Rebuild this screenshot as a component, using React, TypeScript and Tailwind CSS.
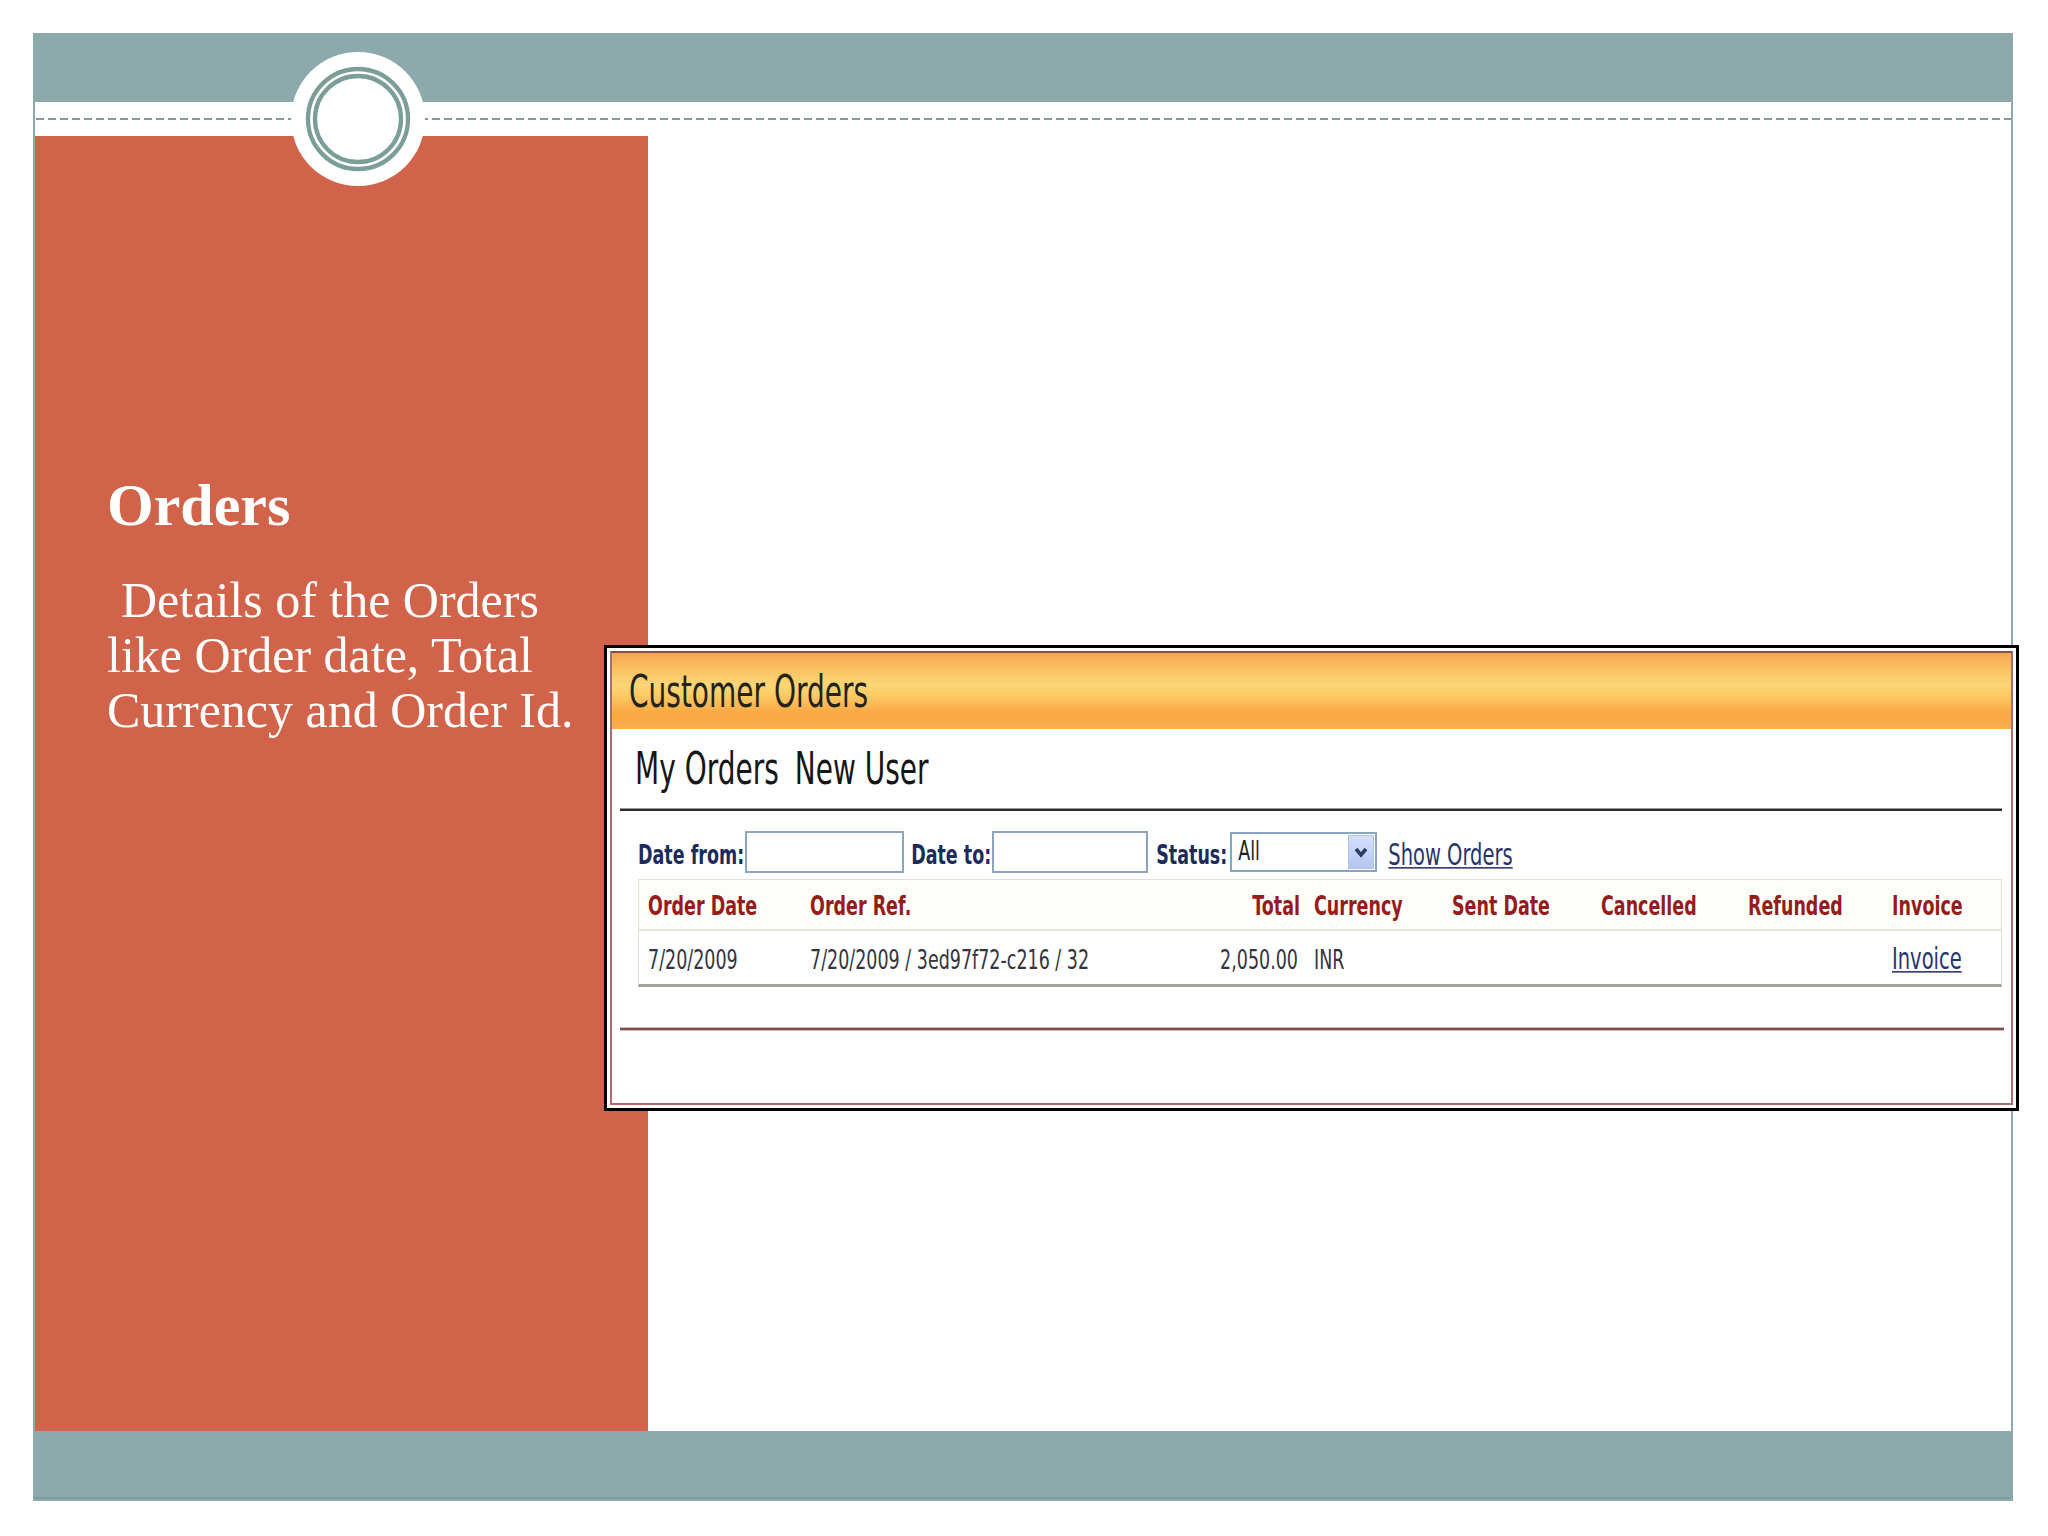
import type { ReactNode } from "react";

// the embedded screenshot is stretched vertically, so its text is too
function S({ children, className = "" }: { children: ReactNode; className?: string }) {
  return <span className={"inline-block scale-y-[1.56] leading-none " + className}>{children}</span>;
}

function Ring() {
  return (
    <div className="absolute left-[291px] top-[52px] h-[134px] w-[134px] rounded-full bg-white">
      <svg width="134" height="134" viewBox="0 0 134 134">
        <circle cx="67" cy="67" r="50" fill="none" stroke="#7b9e99" strokeWidth="4.3" />
        <circle cx="67" cy="67" r="43" fill="none" stroke="#7b9e99" strokeWidth="4.3" />
      </svg>
    </div>
  );
}

function CustomerOrders() {
  return (
    <div className="absolute left-[604px] top-[645px] h-[466px] w-[1415px] border-[3px] border-black bg-white p-[3px] font-['DejaVu_Sans',sans-serif]">
      <div className="flex h-full flex-col border-2 border-[#a86e6e] border-t-[#7b5252]">
        <div className="flex h-[76px] items-center bg-[linear-gradient(to_bottom,#f3a552_0%,#f9bb5c_15%,#fdd676_42%,#fccb66_55%,#f9a743_80%,#fab04e_100%)] pl-[17px] pt-[4px] text-[28px] text-[#23231a]">
          <S>Customer Orders</S>
        </div>

        <div className="flex h-[79px] items-center pl-[23px] pt-[2px] text-[28px] text-[#161616]">
          <S>My Orders</S>
          <S className="ml-[16px]">New User</S>
        </div>
        <div className="ml-[8px] mr-[9px] h-[3px] border-t border-[#9a9a9a] bg-[#2b2b2b]" />

        <div className="flex h-[68px] items-center pl-[26px] pt-[14px] text-[17.5px] text-[#1c2b5a]">
          <S className="mt-[8px] font-bold">Date from:</S>
          <input readOnly className="ml-px h-[42px] w-[159px] border-2 border-[#8aa5c2] bg-white" />
          <S className="ml-[7px] mt-[8px] font-bold">Date to:</S>
          <input readOnly className="ml-px h-[42px] w-[156px] border-2 border-[#8aa5c2] bg-white" />
          <S className="ml-[8px] mt-[8px] font-bold">Status:</S>
          <div className="ml-[3px] flex h-[40px] w-[147px] items-center border-2 border-[#8aa5c2] bg-white">
            <S className="flex-1 pl-[6px] text-[#222]">All</S>
            <div className="mr-px flex h-[34px] w-[26px] items-center justify-center border border-[#aec2ea] bg-[linear-gradient(to_bottom,#d3e0fd,#b4c7f2)]">
              <svg width="16" height="14" viewBox="0 0 16 14">
                <polyline points="3,4 8,10 13,4" fill="none" stroke="#2c3d63" strokeWidth="3.6" />
              </svg>
            </div>
          </div>
          <S className="ml-[11px] mt-[8px] text-[19.5px] text-[#27356a] underline">Show Orders</S>
        </div>

        <div className="ml-[26px] mr-[9px] border border-b-[3px] border-[#e0e0d4] border-b-[#a3a39b]">
          <div className="grid h-[51px] grid-cols-[161px_390px_112px_150px_139px_147px_144px_1fr] items-center border-b-2 border-[#e4e4d8] bg-[#fdfdf9] pt-[4px] text-[17.5px] font-bold text-[#961b1b]">
            <div className="pl-[9px]"><S>Order Date</S></div>
            <div className="pl-[10px]"><S>Order Ref.</S></div>
            <div className="pr-[2px] text-right"><S>Total</S></div>
            <div className="pl-[12px]"><S>Currency</S></div>
            <div className="pl-[0px]"><S>Sent Date</S></div>
            <div className="pl-[10px]"><S>Cancelled</S></div>
            <div className="pl-[10px]"><S>Refunded</S></div>
            <div className="pl-[10px]"><S>Invoice</S></div>
          </div>
          <div className="grid h-[53px] grid-cols-[161px_390px_112px_150px_139px_147px_144px_1fr] items-center pt-[5px] text-[17.5px] text-[#343440]">
            <div className="pl-[9px]"><S>7/20/2009</S></div>
            <div className="pl-[10px]"><S>7/20/2009 / 3ed97f72-c216 / 32</S></div>
            <div className="pr-[4px] text-right"><S>2,050.00</S></div>
            <div className="pl-[12px]"><S>INR</S></div>
            <div />
            <div />
            <div />
            <div className="pl-[10px]"><S className="text-[19.5px] text-[#27356a] underline">Invoice</S></div>
          </div>
        </div>

        <div className="ml-[8px] mr-[7px] mt-[40px] h-[4px] border-y border-[#d9b9b9] bg-[#7d4b4b]" />
        <div className="flex-1" />
      </div>
    </div>
  );
}

export default function App() {
  return (
    <div className="relative h-[1536px] w-[2048px] bg-white p-[33px] font-['Liberation_Serif',serif]">
      <div className="flex h-[1468px] w-[1980px] flex-col border-2 border-[#8caaab]">
        <div className="h-[67px] bg-[#8caaab]" />
        <div className="flex h-[34px] items-center bg-white">
          <div className="ml-px h-[2px] w-full bg-[repeating-linear-gradient(90deg,#7d9d9b_0px,#7d9d9b_8px,transparent_8px,transparent_12px)]" />
        </div>
        <div className="flex flex-1">
          <div className="w-[613px] bg-[#d1634a] pl-[72px] pt-[334px] text-white">
            <h1 className="text-[60px] font-bold leading-[70px]">Orders</h1>
            <p className="mt-[33px] max-w-[490px] indent-[14px] text-[50px] leading-[55px]">
              Details of the Orders like Order date, Total Currency and Order Id.
            </p>
          </div>
          <div className="flex-1 bg-white" />
        </div>
        <div className="h-[68px] border-b-2 border-[#7d9c9c] bg-[#8caaab]" />
      </div>
      <Ring />
      <CustomerOrders />
    </div>
  );
}
